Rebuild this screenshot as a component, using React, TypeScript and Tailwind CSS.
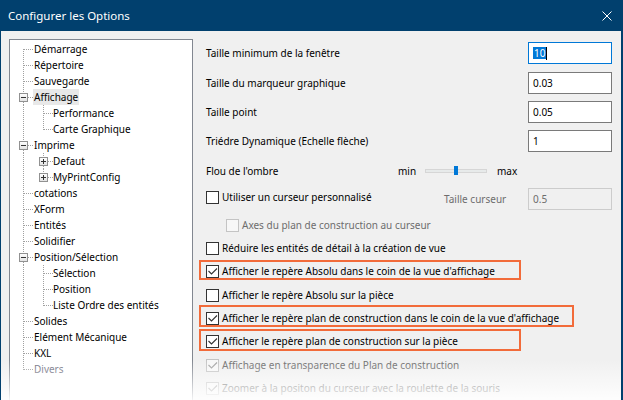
import React from 'react';

type TreeItem = {
  t: string;
  l?: number;
  exp?: 'minus' | 'plus';
  sel?: boolean;
  last?: boolean;
  gray?: boolean;
};

const tree: TreeItem[] = [
  { t: 'Démarrage' },
  { t: 'Répertoire' },
  { t: 'Sauvegarde' },
  { t: 'Affichage', exp: 'minus', sel: true },
  { t: 'Performance', l: 1 },
  { t: 'Carte Graphique', l: 1, last: true },
  { t: 'Imprime', exp: 'minus' },
  { t: 'Defaut', l: 1, exp: 'plus' },
  { t: 'MyPrintConfig', l: 1, exp: 'plus', last: true },
  { t: 'cotations' },
  { t: 'XForm' },
  { t: 'Entités' },
  { t: 'Solidifier' },
  { t: 'Position/Sélection', exp: 'minus' },
  { t: 'Sélection', l: 1 },
  { t: 'Position', l: 1 },
  { t: 'Liste Ordre des entités', l: 1, last: true },
  { t: 'Solides' },
  { t: 'Elément Mécanique' },
  { t: 'KXL' },
  { t: 'Divers', gray: true },
];

const DOT = '#a0a0a0';

function VLine({ x, y0, y1 }: { x: number; y0: number; y1: number }) {
  return <line x1={x + 0.5} y1={y0} x2={x + 0.5} y2={y1} stroke={DOT} strokeDasharray="1 1" />;
}
function HLine({ x0, x1 }: { x0: number; x1: number }) {
  return <line x1={x0} y1={8.5} x2={x1} y2={8.5} stroke={DOT} strokeDasharray="1 1" />;
}
function Expander({ cx, kind }: { cx: number; kind: 'minus' | 'plus' }) {
  const x = cx - 4;
  return (
    <g>
      <rect x={x + 0.5} y={4.5} width={8} height={8} fill="url(#exg)" stroke="#919191" />
      <line x1={x + 2} y1={8.5} x2={x + 7} y2={8.5} stroke="#333" />
      {kind === 'plus' && <line x1={cx + 0.5} y1={6} x2={cx + 0.5} y2={11} stroke="#333" />}
    </g>
  );
}

function Gutter({ item, first, lastRoot }: { item: TreeItem; first: boolean; lastRoot: boolean }) {
  const level = item.l ?? 0;
  const w = level === 0 ? 24 : 43;
  return (
    <svg width={w} height={16} viewBox={`0 0 ${w} 16`} className="shrink-0">
      <defs>
        <linearGradient id="exg" x1="0" y1="0" x2="0" y2="1">
          <stop offset="0" stopColor="#ffffff" />
          <stop offset="1" stopColor="#e2e2e2" />
        </linearGradient>
      </defs>
      {level === 0 ? (
        item.exp ? (
          <>
            <VLine x={13} y0={first ? 8 : 0} y1={4} />
            {!lastRoot && <VLine x={13} y0={13} y1={16} />}
            <Expander cx={13} kind={item.exp} />
            <HLine x0={18} x1={24} />
          </>
        ) : (
          <>
            <VLine x={13} y0={first ? 8 : 0} y1={lastRoot ? 9 : 16} />
            <HLine x0={14} x1={24} />
          </>
        )
      ) : (
        <>
          <VLine x={13} y0={0} y1={16} />
          {item.exp ? (
            <>
              <VLine x={33} y0={0} y1={4} />
              {!item.last && <VLine x={33} y0={13} y1={16} />}
              <Expander cx={33} kind={item.exp} />
              <HLine x0={38} x1={43} />
            </>
          ) : (
            <>
              <VLine x={33} y0={0} y1={item.last ? 9 : 16} />
              <HLine x0={34} x1={43} />
            </>
          )}
        </>
      )}
    </svg>
  );
}

function Check({ checked, disabled }: { checked?: boolean; disabled?: boolean }) {
  const border = disabled ? '#c4c4c4' : '#333333';
  const fill = disabled ? '#f7f7f7' : '#ffffff';
  const mark = disabled ? '#a3a3a3' : '#333333';
  return (
    <svg width="13" height="13" viewBox="0 0 13 13" className="shrink-0">
      <rect x="0.5" y="0.5" width="12" height="12" fill={fill} stroke={border} />
      {checked && <path d="M2.5 6 L5.5 9 L11 3.5" fill="none" stroke={mark} strokeWidth="1.1" />}
    </svg>
  );
}

function InputRow({ label, value, focused, className }: { label: string; value: string; focused?: boolean; className: string }) {
  return (
    <div className={`flex items-center h-[22px] ${className}`}>
      <span className="flex-1">{label}</span>
      <div
        className={`w-[84px] h-[22px] bg-white flex items-center pl-[4px] border ${
          focused ? 'border-[#0078d7]' : 'border-[#7a7a7a]'
        }`}
      >
        {focused ? (
          <>
            <span className="bg-[#0078d7] text-white leading-[12px] px-[1px]">{value}</span>
            <span className="w-[1px] h-[13px] bg-black" />
          </>
        ) : (
          <span>{value}</span>
        )}
      </div>
    </div>
  );
}

function CheckRow({
  text,
  checked,
  disabled,
  className,
  box,
}: {
  text: string;
  checked?: boolean;
  disabled?: boolean;
  className: string;
  box?: string;
}) {
  return (
    <div className={`relative flex items-center h-[16px] gap-[3px] ${className}`}>
      <Check checked={checked} disabled={disabled} />
      <span className={disabled ? 'text-[#6d6d6d]' : 'text-black'}>{text}</span>
      {box && <div className={`absolute left-[-7px] border-2 border-[#f26b3a] ${box}`} />}
    </div>
  );
}

export default function App() {
  return (
    <div className="relative w-[623px] h-[400px] overflow-hidden bg-[#f0f0f0] border-l border-r-2 border-[#01406e] font-['Noto_Sans',sans-serif]">
      {/* Title bar */}
      <div className="h-[31px] bg-[#01406e] flex items-center justify-between pl-[7px] pr-[9px]">
        <span className="text-white text-[11.5px]">Configurer les Options</span>
        <svg width="10" height="10" viewBox="0 0 10 10">
          <path d="M0.5 0.5 L9.5 9.5 M9.5 0.5 L0.5 9.5" stroke="#ffffff" strokeWidth="1" />
        </svg>
      </div>

      <div className="flex h-[369px]">
        {/* Tree */}
        <div className="mt-[8px] ml-[8px] w-[184px] h-[400px] shrink-0 bg-white border border-[#828790] pt-[1px] text-[10px] text-black">
          {tree.map((item, i) => (
            <div key={i} className="flex items-center h-[16px]">
              <Gutter item={item} first={i === 0} lastRoot={i === tree.length - 1} />
              <span
                className={`h-[16px] flex items-center px-[1px] -ml-[1px] whitespace-nowrap ${
                  item.sel ? 'bg-[#e8e8e8]' : ''
                } ${item.gray ? 'text-[#6d6d7d]' : ''}`}
              >
                {item.t}
              </span>
            </div>
          ))}
        </div>

        {/* Options */}
        <div className="flex-1 flex flex-col pl-[13px] pr-[9px] text-[10px] text-black">
          <InputRow className="mt-[11px]" label="Taille minimum de la fenêtre" value="10" focused />
          <InputRow className="mt-[8px]" label="Taille du marqueur graphique" value="0.03" />
          <InputRow className="mt-[7px]" label="Taille point" value="0.05" />
          <InputRow className="mt-[7px]" label="Triédre Dynamique (Echelle flèche)" value="1" />

          <div className="flex items-center h-[16px] mt-[11px]">
            <span className="w-[192px]">Flou de l'ombre</span>
            <span className="w-[27px]">min</span>
            <div className="relative w-[62px] h-[4px] bg-[#e7eaea] border border-[#d6d6d6]">
              <div className="absolute left-[28px] top-[-4px] w-[4px] h-[9px] bg-[#0078d7]" />
            </div>
            <span className="ml-[10px]">max</span>
          </div>

          <div className="flex items-start h-[22px] mt-[9px]">
            <div className="flex-1 flex items-center gap-[3px] h-[16px] mt-[1px]">
              <Check />
              <span>Utiliser un curseur personnalisé</span>
            </div>
            <span className="w-[84px] h-[22px] flex items-center text-[#6d6d6d]">Taille curseur</span>
            <div className="w-[84px] h-[22px] bg-[#f0f0f0] border border-[#cccccc] flex items-center pl-[4px] text-[#6d6d6d]">
              0.5
            </div>
          </div>

          <CheckRow className="mt-[7px] pl-[20px]" text="Axes du plan de construction au curseur" disabled />
          <CheckRow className="mt-[7px]" text="Réduire les entités de détail à la création de vue" />
          <CheckRow
            className="mt-[7px]"
            text="Afficher le repère Absolu dans le coin de la vue d'affichage"
            checked
            box="top-[-3px] h-[20px] w-[322px]"
          />
          <CheckRow className="mt-[8px]" text="Afficher le repère Absolu sur la pièce" />
          <CheckRow
            className="mt-[7px]"
            text="Afficher le repère plan de construction dans le coin de la vue d'affichage"
            checked
            box="top-[-5px] h-[22px] w-[375px]"
          />
          <CheckRow
            className="mt-[7px]"
            text="Afficher le repère plan de construction sur la pièce"
            checked
            box="top-[-4px] h-[22px] w-[322px]"
          />
          <CheckRow className="mt-[8px]" text="Affichage en transparence du Plan de construction" checked disabled />
          <CheckRow className="mt-[7px]" text="Zoomer à la positon du curseur avec la roulette de la souris" checked disabled />
        </div>
      </div>

      {/* bottom fade of the screenshot */}
      <div className="absolute inset-x-0 bottom-0 h-[40px] bg-linear-to-b from-white/0 to-white/90 pointer-events-none" />
    </div>
  );
}
